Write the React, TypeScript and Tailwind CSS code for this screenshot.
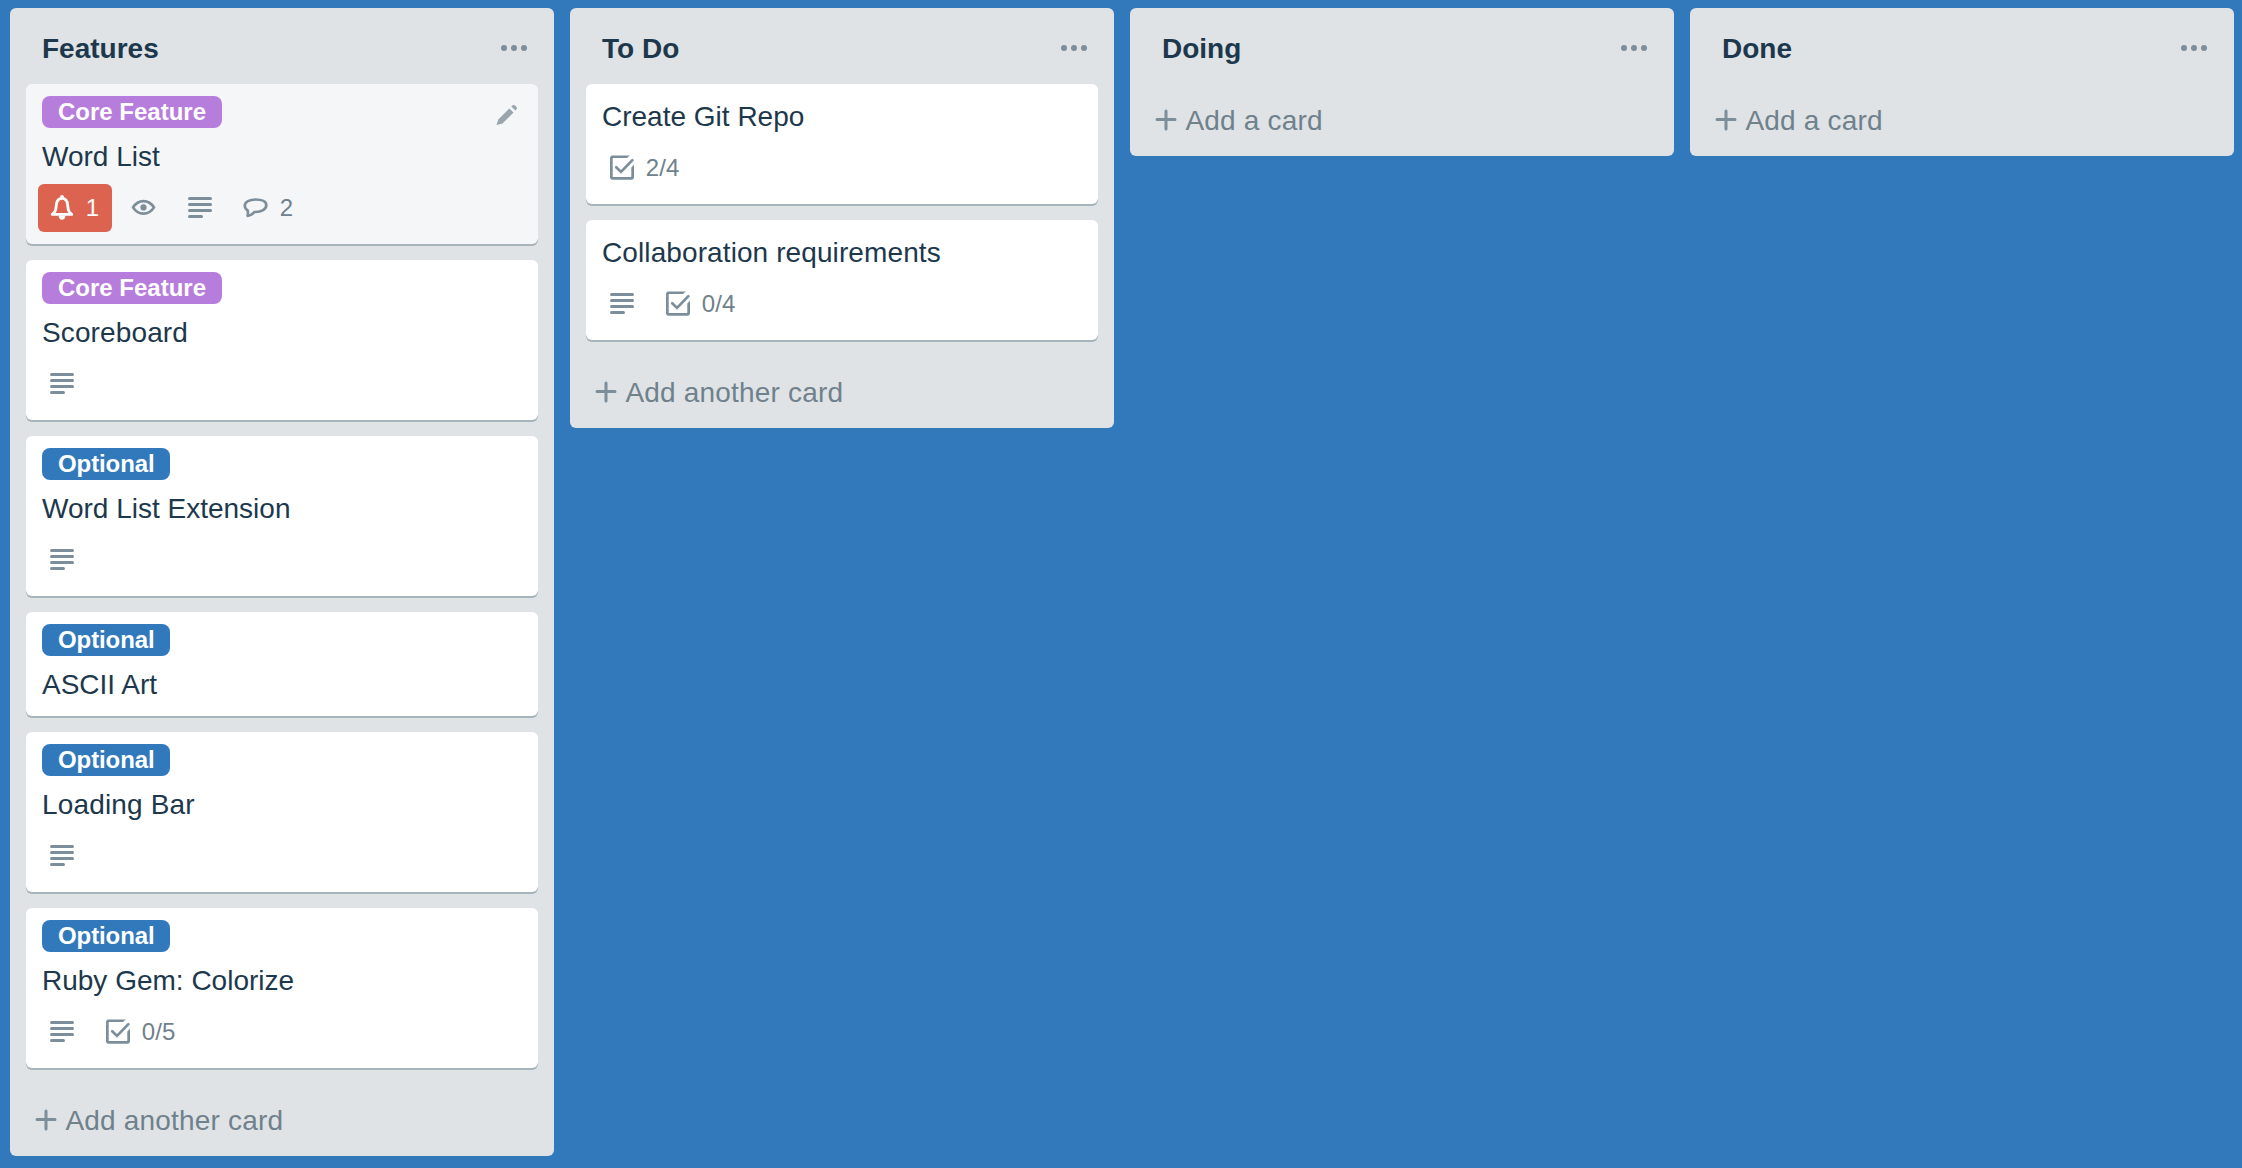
import React from "react";

type Badge =
  | { kind: "notification"; text: string }
  | { kind: "watch" }
  | { kind: "description" }
  | { kind: "comments"; text: string }
  | { kind: "checklist"; text: string };

type Card = {
  title: string;
  tracking?: string;
  label?: "core" | "optional";
  badges?: Badge[];
  hovered?: boolean;
};

type ListData = { name: string; cards: Card[] };

const LISTS: ListData[] = [
  {
    name: "Features",
    cards: [
      {
        title: "Word List",
        label: "core",
        hovered: true,
        badges: [
          { kind: "notification", text: "1" },
          { kind: "watch" },
          { kind: "description" },
          { kind: "comments", text: "2" },
        ],
      },
      { title: "Scoreboard", tracking: "tracking-[0.12px]", label: "core", badges: [{ kind: "description" }] },
      { title: "Word List Extension", label: "optional", badges: [{ kind: "description" }] },
      { title: "ASCII Art", label: "optional" },
      { title: "Loading Bar", tracking: "tracking-[0.15px]", label: "optional", badges: [{ kind: "description" }] },
      {
        title: "Ruby Gem: Colorize",
        label: "optional",
        badges: [{ kind: "description" }, { kind: "checklist", text: "0/5" }],
      },
    ],
  },
  {
    name: "To Do",
    cards: [
      { title: "Create Git Repo", badges: [{ kind: "checklist", text: "2/4" }] },
      {
        title: "Collaboration requirements",
        tracking: "tracking-[0.1px]",
        badges: [{ kind: "description" }, { kind: "checklist", text: "0/4" }],
      },
    ],
  },
  { name: "Doing", cards: [] },
  { name: "Done", cards: [] },
];

function BadgeIcon({ kind }: { kind: Badge["kind"] }) {
  return (
    <svg viewBox="0 0 32 32" className="size-8 shrink-0" fill="none" stroke="currentColor">
      {kind === "notification" && (
        <>
          <path
            d="M6.200 22.400C9.700 19.800 9.900 17.500 10.300 13.200C10.700 8.900 12.600 6.400 16 6.400S21.300 8.900 21.700 13.200C22.100 17.500 22.300 19.800 25.800 22.400Z"
            strokeWidth="2.8"
            strokeLinejoin="round"
          />
          <path d="M14 5.5C14 3.8 14.9 3 16 3S18 3.8 18 5.5Z" fill="currentColor" stroke="none" />
          <path d="M12.500 23.500H19.500C19.300 26.300 17.900 27.700 16 27.700S12.700 26.300 12.500 23.500Z" fill="currentColor" stroke="none" />
        </>
      )}
      {kind === "watch" && (
        <>
          <path
            d="M5 15.4C7.6 11.3 11.2 9.1 15.5 9.1S23.4 11.3 26 15.4C23.4 19.5 19.8 21.7 15.5 21.7S7.6 19.5 5 15.4Z"
            strokeWidth="2.7"
            strokeLinejoin="round"
          />
          <circle cx="15.5" cy="15.4" r="3.1" fill="currentColor" stroke="none" />
        </>
      )}
      {kind === "description" && (
        <path d="M5.5 6.5H26.5M5.5 12.5H26.5M5.5 18.5H26.5M5.5 24.5H17.5" strokeWidth="3" strokeLinecap="round" />
      )}
      {kind === "comments" && (
        <path
          d="M7.600 18.400C5.700 17.200 4.800 15.600 4.800 13.600C4.800 9.900 9.500 7.500 15.700 7.500S26.300 9.700 26.300 13.300C26.300 17.300 21.500 19.800 15.300 20H14.300C12.500 22.300 10.300 23.500 7.600 23.900C8.100 22 8.200 20.500 7.600 18.400Z"
          strokeWidth="2.7"
          strokeLinejoin="round"
        />
      )}
      {kind === "checklist" && (
        <>
          <path
            d="M23.7 3.4L21 6H7.2C6.9 6 6.7 6.2 6.7 6.5V24.5C6.7 24.8 6.9 25 7.2 25H24.8C25.1 25 25.3 24.8 25.3 24.5V15.5L28 12.8V25.2C28 26.7 27 27.7 25.5 27.7H6.5C5 27.7 4 26.7 4 25.2V5.8C4 4.3 5 3.4 6.5 3.4Z"
            fill="currentColor"
            stroke="none"
          />
          <path d="M10.2 15.2L15 19.9L26.4 8.1" strokeWidth="2.7" strokeLinecap="round" />
        </>
      )}
    </svg>
  );
}

function BadgeItem({ badge }: { badge: Badge }) {
  const tone =
    badge.kind === "notification" ? "bg-[#dc6350] text-white" : "text-[#7b8e9a]";
  return (
    <div className={"flex h-12 items-center rounded-md px-2 " + tone}>
      <BadgeIcon kind={badge.kind} />
      {"text" in badge && (
        <span
          className={
            "pr-[5px] pl-[7.65px] text-2xl leading-8 " +
            (badge.kind === "notification" ? "text-white" : "tracking-[0.2px] text-[#6f818c]")
          }
        >
          {badge.text}
        </span>
      )}
    </div>
  );
}

function Label({ kind }: { kind: "core" | "optional" }) {
  return (
    <div className="mb-2 flex">
      {kind === "core" ? (
        <span className="h-8 w-[180px] rounded-lg bg-[#b77ddc] pl-4 text-2xl leading-8 font-bold whitespace-nowrap text-white">
          Core Feature
        </span>
      ) : (
        <span className="h-8 w-32 rounded-lg bg-[#3179ba] pl-4 text-2xl leading-8 font-bold tracking-[-0.1px] whitespace-nowrap text-white">
          Optional
        </span>
      )}
    </div>
  );
}

function CardView({ card }: { card: Card }) {
  return (
    <article
      className={
        "relative rounded-md px-4 py-3 shadow-[0_2px_0_#a9b3ba] " +
        (card.hovered ? "bg-[#f5f6f8]" : "bg-white")
      }
    >
      {card.label && <Label kind={card.label} />}
      <h3 className={"h-10 pt-px text-[28px] leading-10 text-[#1d384c] " + (card.tracking ?? "")}>
        {card.title}
      </h3>
      {card.badges && (
        <div className="mt-2 -ml-1 flex gap-2">
          {card.badges.map((b, i) => (
            <BadgeItem key={i} badge={b} />
          ))}
        </div>
      )}
      {card.hovered && (
        <svg viewBox="0 0 22 22" className="absolute top-5 right-5 size-[22px] text-[#98a5ae]" fill="currentColor">
          <path d="M0.5 21.1L2.3 15.4L13.3 4.4L17.5 8.6L6.5 19.6Z" />
          <path d="M15.3 2.4L16.6 1.3C17.3 0.7 18.3 0.8 19 1.5L20.3 2.8C21 3.5 21.1 4.5 20.5 5.2L19.4 6.5Z" />
        </svg>
      )}
    </article>
  );
}

function ListView({ list }: { list: ListData }) {
  return (
    <section className="w-[544px] shrink-0 rounded-md bg-[#dfe3e6] px-4">
      <header className="flex h-[76px] items-center justify-between pt-1 pr-[11px] pl-4">
        <h2 className="pt-0.5 text-[28px] leading-10 font-bold text-[#1d384c]">{list.name}</h2>
        <svg viewBox="0 0 26 6" className="h-1.5 w-[26px] text-[#7b8e9a]" fill="currentColor">
          <circle cx="3" cy="3" r="3" />
          <circle cx="13" cy="3" r="3" />
          <circle cx="23" cy="3" r="3" />
        </svg>
      </header>
      {list.cards.length > 0 && (
        <div className="mb-4 flex flex-col gap-4">
          {list.cards.map((c) => (
            <CardView key={c.title} card={c} />
          ))}
        </div>
      )}
      <button className="flex h-[72px] items-center pl-[9px] text-[28px] leading-10 tracking-[0.18px] text-[#6f818c]">
        <svg viewBox="0 0 22 22" className="mr-[8.5px] size-[22px] text-[#7b8e9a]" fill="none" stroke="currentColor">
          <path d="M11 2V20M2 10.500H20" strokeWidth="3" strokeLinecap="round" />
        </svg>
        <span className="pt-0.5">{list.cards.length > 0 ? "Add another card" : "Add a card"}</span>
      </button>
    </section>
  );
}

export default function App() {
  return (
    <main className="flex h-screen w-full items-start gap-4 overflow-hidden bg-[#3179ba] pt-2 pl-2.5 font-['Liberation_Sans',Arial,sans-serif]">
      {LISTS.map((l) => (
        <ListView key={l.name} list={l} />
      ))}
    </main>
  );
}
